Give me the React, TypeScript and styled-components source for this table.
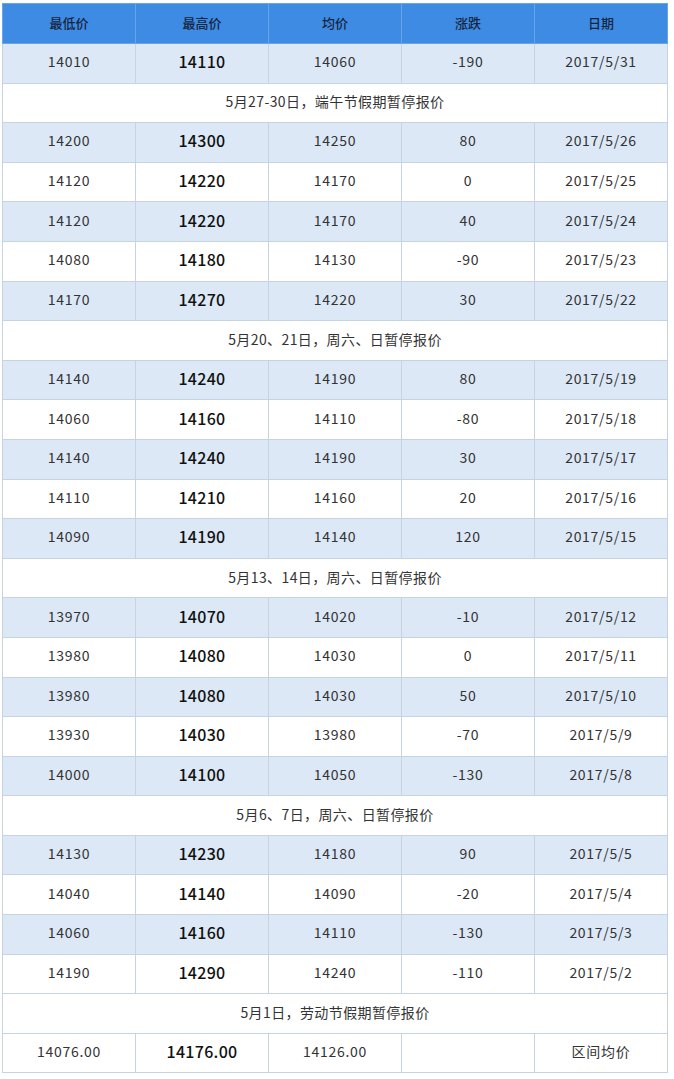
import React from 'react';
import styled, { createGlobalStyle } from 'styled-components';

// Type層
type Row =
  | { kind: 'data'; low: string; high: string; avg: string; change: string; date: string }
  | { kind: 'note'; text: string };

const rows: Row[] = [
  { kind: 'data', low: '14010', high: '14110', avg: '14060', change: '-190', date: '2017/5/31' },
  { kind: 'note', text: '5月27-30日，端午节假期暂停报价' },
  { kind: 'data', low: '14200', high: '14300', avg: '14250', change: '80', date: '2017/5/26' },
  { kind: 'data', low: '14120', high: '14220', avg: '14170', change: '0', date: '2017/5/25' },
  { kind: 'data', low: '14120', high: '14220', avg: '14170', change: '40', date: '2017/5/24' },
  { kind: 'data', low: '14080', high: '14180', avg: '14130', change: '-90', date: '2017/5/23' },
  { kind: 'data', low: '14170', high: '14270', avg: '14220', change: '30', date: '2017/5/22' },
  { kind: 'note', text: '5月20、21日，周六、日暂停报价' },
  { kind: 'data', low: '14140', high: '14240', avg: '14190', change: '80', date: '2017/5/19' },
  { kind: 'data', low: '14060', high: '14160', avg: '14110', change: '-80', date: '2017/5/18' },
  { kind: 'data', low: '14140', high: '14240', avg: '14190', change: '30', date: '2017/5/17' },
  { kind: 'data', low: '14110', high: '14210', avg: '14160', change: '20', date: '2017/5/16' },
  { kind: 'data', low: '14090', high: '14190', avg: '14140', change: '120', date: '2017/5/15' },
  { kind: 'note', text: '5月13、14日，周六、日暂停报价' },
  { kind: 'data', low: '13970', high: '14070', avg: '14020', change: '-10', date: '2017/5/12' },
  { kind: 'data', low: '13980', high: '14080', avg: '14030', change: '0', date: '2017/5/11' },
  { kind: 'data', low: '13980', high: '14080', avg: '14030', change: '50', date: '2017/5/10' },
  { kind: 'data', low: '13930', high: '14030', avg: '13980', change: '-70', date: '2017/5/9' },
  { kind: 'data', low: '14000', high: '14100', avg: '14050', change: '-130', date: '2017/5/8' },
  { kind: 'note', text: '5月6、7日，周六、日暂停报价' },
  { kind: 'data', low: '14130', high: '14230', avg: '14180', change: '90', date: '2017/5/5' },
  { kind: 'data', low: '14040', high: '14140', avg: '14090', change: '-20', date: '2017/5/4' },
  { kind: 'data', low: '14060', high: '14160', avg: '14110', change: '-130', date: '2017/5/3' },
  { kind: 'data', low: '14190', high: '14290', avg: '14240', change: '-110', date: '2017/5/2' },
  { kind: 'note', text: '5月1日，劳动节假期暂停报价' },
];

const GlobalStyle = createGlobalStyle`
  body {
    margin: 0;
    background: #fff;
    font-family: "Noto Sans CJK SC", "Noto Sans", sans-serif;
  }
`;

// Style層
const Table = styled.table`
  margin: 3px 0 0 2px;
  width: 666px;
  border-collapse: collapse;
  table-layout: fixed;
  border: 1px solid #c6d3e0;
`;

const Th = styled.th`
  box-sizing: border-box;
  height: 40px;
  padding: 0 0 2px;
  background: #3e8be4;
  color: #18263d;
  font-size: 13px;
  font-weight: 500;
  text-align: center;
  border: 1px solid #6aa3e8;
`;

const Tr = styled.tr<{ $shaded?: boolean }>`
  background: ${(p) => (p.$shaded ? '#dce8f6' : '#ffffff')};
`;

const Td = styled.td<{ $strong?: boolean }>`
  box-sizing: border-box;
  height: 39.6px;
  padding: 0 0 4px;
  text-align: center;
  border: 1px solid #c6d3e0;
  color: ${(p) => (p.$strong ? '#111' : '#333')};
  font-size: ${(p) => (p.$strong ? '16px' : '14px')};
  font-weight: ${(p) => (p.$strong ? 500 : 400)};
  letter-spacing: ${(p) => (p.$strong ? '0.3px' : '0.7px')};
`;

const NoteCell = styled.td`
  box-sizing: border-box;
  height: 39.6px;
  padding: 0 0 3px;
  text-align: center;
  border: 1px solid #c6d3e0;
  color: #333;
  font-size: 14px;
  letter-spacing: 0.4px;
`;

// DOM層
const App: React.FC = () => {
  let shade = true;
  return (
    <>
      <GlobalStyle />
      <Table>
        <thead>
          <tr>
            <Th>最低价</Th>
            <Th>最高价</Th>
            <Th>均价</Th>
            <Th>涨跌</Th>
            <Th>日期</Th>
          </tr>
        </thead>
        <tbody>
          {rows.map((r, i) => {
            if (r.kind === 'note') {
              shade = true;
              return (
                <Tr key={i}>
                  <NoteCell colSpan={5}>{r.text}</NoteCell>
                </Tr>
              );
            }
            const s = shade;
            shade = !shade;
            return (
              <Tr key={i} $shaded={s}>
                <Td>{r.low}</Td>
                <Td $strong>{r.high}</Td>
                <Td>{r.avg}</Td>
                <Td>{r.change}</Td>
                <Td>{r.date}</Td>
              </Tr>
            );
          })}
          <Tr>
            <Td>14076.00</Td>
            <Td $strong>14176.00</Td>
            <Td>14126.00</Td>
            <Td></Td>
            <Td>区间均价</Td>
          </Tr>
        </tbody>
      </Table>
    </>
  );
};

export default App;
